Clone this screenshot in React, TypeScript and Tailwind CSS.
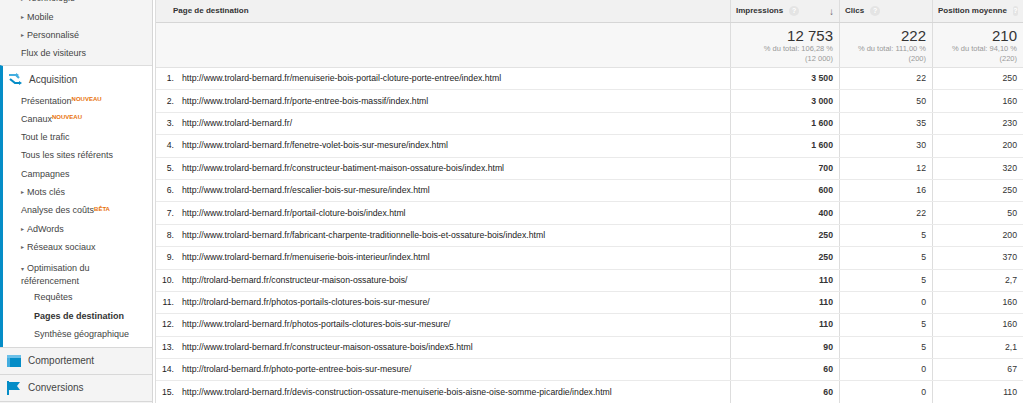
import React from "react";

const rows: [string, string, string, string][] = [
  ["http://www.trolard-bernard.fr/menuiserie-bois-portail-cloture-porte-entree/index.html", "3 500", "22", "250"],
  ["http://www.trolard-bernard.fr/porte-entree-bois-massif/index.html", "3 000", "50", "160"],
  ["http://www.trolard-bernard.fr/", "1 600", "35", "230"],
  ["http://www.trolard-bernard.fr/fenetre-volet-bois-sur-mesure/index.html", "1 600", "30", "200"],
  ["http://www.trolard-bernard.fr/constructeur-batiment-maison-ossature-bois/index.html", "700", "12", "320"],
  ["http://www.trolard-bernard.fr/escalier-bois-sur-mesure/index.html", "600", "16", "250"],
  ["http://www.trolard-bernard.fr/portail-cloture-bois/index.html", "400", "22", "50"],
  ["http://www.trolard-bernard.fr/fabricant-charpente-traditionnelle-bois-et-ossature-bois/index.html", "250", "5", "200"],
  ["http://www.trolard-bernard.fr/menuiserie-bois-interieur/index.html", "250", "5", "370"],
  ["http://trolard-bernard.fr/constructeur-maison-ossature-bois/", "110", "5", "2,7"],
  ["http://trolard-bernard.fr/photos-portails-clotures-bois-sur-mesure/", "110", "0", "160"],
  ["http://www.trolard-bernard.fr/photos-portails-clotures-bois-sur-mesure/", "110", "5", "160"],
  ["http://www.trolard-bernard.fr/constructeur-maison-ossature-bois/index5.html", "90", "5", "2,1"],
  ["http://trolard-bernard.fr/photo-porte-entree-bois-sur-mesure/", "60", "0", "67"],
  ["http://www.trolard-bernard.fr/devis-construction-ossature-menuiserie-bois-aisne-oise-somme-picardie/index.html", "60", "0", "110"],
];

const Tri = ({ down }: { down?: boolean }) => (
  <span className="inline-block w-[6px] text-[6px] text-[#666]">{down ? "▾" : "▸"}</span>
);

const Q = () => (
  <span className="inline-flex items-center justify-center w-[10px] h-[10px] rounded-full bg-[#e4e4e4] text-[7px] text-white ml-[6px] align-middle">?</span>
);

const Item = ({ children, cls = "" }: { children: React.ReactNode; cls?: string }) => (
  <div className={`h-[18.3px] flex items-center whitespace-nowrap ${cls}`}>{children}</div>
);

const Badge = ({ t }: { t: string }) => (
  <span className="text-[6px] text-[#e8710a] font-bold self-start mt-[3px]">{t}</span>
);

export default function App() {
  return (
    <div className="w-[1024px] h-[403px] overflow-hidden flex bg-white text-[#333] text-[9px]" style={{ fontFamily: "'Liberation Sans', Arial, sans-serif" }}>
      <div className="w-[153px] shrink-0 bg-[#f4f4f4] border-r border-[#d6d6d6] flex flex-col">
        <div className="bg-[#f4f4f4] pl-[21px] mt-[-10px] text-[#444]">
          <Item><Tri />Technologie</Item>
          <Item><Tri />Mobile</Item>
          <Item><Tri />Personnalisé</Item>
          <Item>Flux de visiteurs</Item>
        </div>
        <div className="h-[2px]" />
        <div className="bg-white border-t border-[#ddd] border-l-[3px] border-l-[#058dc7] text-[#444] pb-[3px]">
          <div className="h-[26px] flex items-center pl-[4px] text-[10px]">
            <svg width="16" height="16" viewBox="0 0 16 16" className="mr-[6px]">
              <path d="M2 4h7l3 3" stroke="#44aee0" strokeWidth="2.2" fill="none" />
              <path d="M3 8l5 4h5" stroke="#058dc7" strokeWidth="2.2" fill="none" />
              <path d="M12 10l3 2-3 2z" fill="#058dc7" />
              <path d="M9 2l3 2-3 2z" fill="#44aee0" />
            </svg>
            Acquisition
          </div>
          <div className="pl-[18px]">
            <Item>Présentation<Badge t="NOUVEAU" /></Item>
            <Item>Canaux<Badge t="NOUVEAU" /></Item>
            <Item>Tout le trafic</Item>
            <Item>Tous les sites référents</Item>
            <Item>Campagnes</Item>
            <Item><Tri />Mots clés</Item>
            <Item>Analyse des coûts<Badge t="BÊTA" /></Item>
            <Item><Tri />AdWords</Item>
            <Item><Tri />Réseaux sociaux</Item>
            <div className="pt-[5px] leading-[12px]"><Tri down />Optimisation du<br />référencement</div>
            <div className="pl-[13px] pt-[2px]">
              <Item>Requêtes</Item>
              <Item cls="font-bold text-[#333]">Pages de destination</Item>
              <Item>Synthèse géographique</Item>
            </div>
          </div>
        </div>
        <div className="border-t border-[#d8d8d8] h-[27px] flex items-center pl-[7px] text-[10px] text-[#444]">
          <svg width="14" height="12" viewBox="0 0 14 12" className="mr-[7px]">
            <rect x="0" y="0" width="14" height="12" fill="#058dc7" />
            <rect x="0" y="0" width="14" height="3" fill="#6cc0e8" />
            <rect x="0" y="3" width="3" height="9" fill="#44aee0" />
          </svg>
          Comportement
        </div>
        <div className="border-t border-[#d8d8d8] h-[27px] flex items-center pl-[7px] text-[10px] text-[#444]">
          <svg width="14" height="14" viewBox="0 0 14 14" className="mr-[7px]">
            <rect x="0" y="0" width="2" height="14" fill="#058dc7" />
            <path d="M2 1h11l-3 4 3 4H2z" fill="#058dc7" />
          </svg>
          Conversions
        </div>
        <div className="border-t border-[#d8d8d8] flex-1" />
      </div>

      <div className="flex-1 pl-[2px]">
        <div className="border-l border-[#ddd] w-[868px]">
          <div className="flex h-[23px] bg-[#f1f1f1] border-b border-[#d6d6d6] font-bold text-[8px] text-[#333] whitespace-nowrap">
            <div className="w-[574px] pl-[17px] flex items-center">Page de destination</div>
            <div className="w-[109px] border-l border-[#ddd] px-[5px] flex items-center">Impressions<Q /><span className="ml-auto text-[#666] text-[10px] font-normal">↓</span></div>
            <div className="w-[93px] border-l border-[#ddd] px-[5px] flex items-center">Clics<Q /></div>
            <div className="w-[91px] border-l border-[#ddd] px-[5px] flex items-center">Position moyenne<Q /></div>
          </div>
          <div className="flex h-[45px] bg-[#f7f7f7] border-b border-[#e2e2e2]">
            <div className="w-[574px]" />
            {[["12 753", "% du total: 106,28 %", "(12 000)", "w-[109px]"], ["222", "% du total: 111,00 %", "(200)", "w-[93px]"], ["210", "% du total: 94,10 %", "(220)", "w-[91px]"]].map(([v, p, t, w]) => (
              <div key={v} className={`${w} border-l border-[#ddd] text-right pr-[6px] pt-[5px] leading-none whitespace-nowrap`}>
                <div className="text-[15px] text-[#333]">{v}</div>
                <div className="text-[7.5px] text-[#999] mt-[2px]">{p}</div>
                <div className="text-[7.5px] text-[#999] mt-[2px]">{t}</div>
              </div>
            ))}
          </div>
          {rows.map((r, i) => (
            <div key={i} className="flex h-[22.4px] border-b border-[#eaeaea] items-center text-[8.7px] whitespace-nowrap">
              <div className="w-[574px] flex items-center text-[#222]">
                <span className="w-[26px] text-right pr-[8px]">{i + 1}.</span>
                <span>{r[0]}</span>
              </div>
              <div className="w-[109px] h-full border-l border-[#ddd] flex items-center justify-end pr-[6px] font-bold">{r[1]}</div>
              <div className="w-[93px] h-full border-l border-[#ddd] flex items-center justify-end pr-[6px]">{r[2]}</div>
              <div className="w-[91px] h-full border-l border-[#ddd] flex items-center justify-end pr-[6px]">{r[3]}</div>
            </div>
          ))}
        </div>
      </div>
    </div>
  );
}
